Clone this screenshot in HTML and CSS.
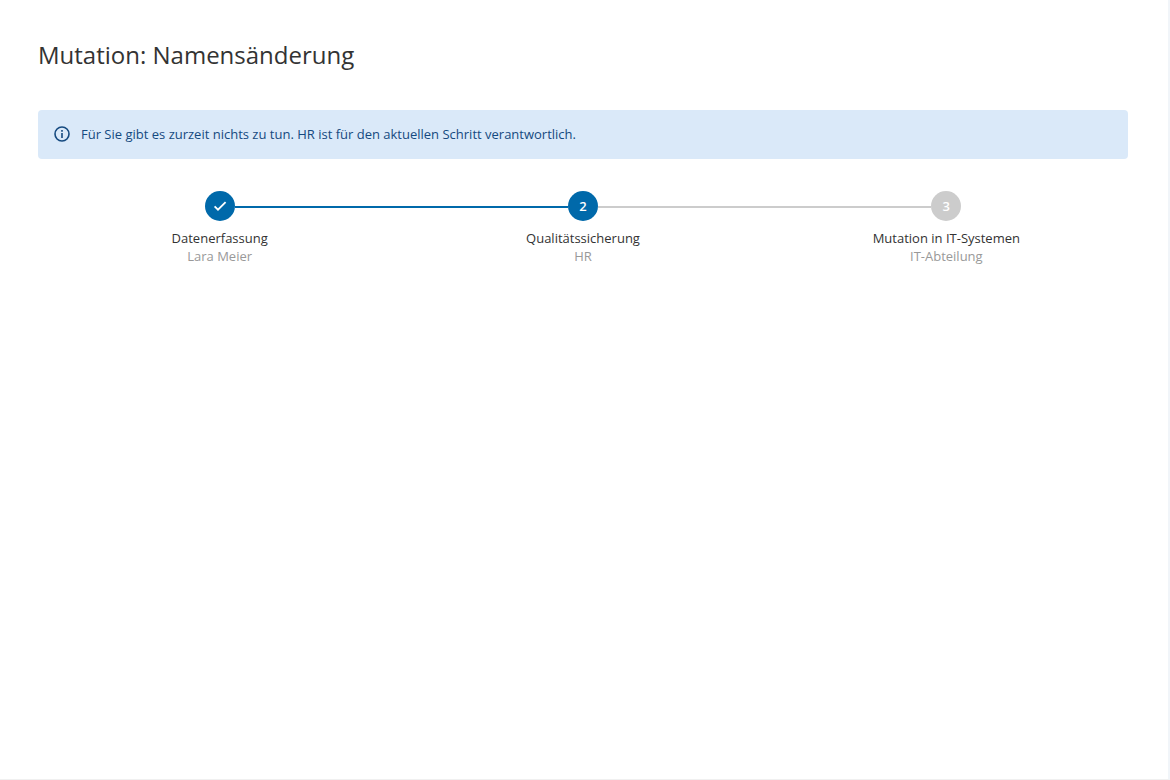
FILE: index.html
```html
<!DOCTYPE html>
<html lang="de">
<head>
<meta charset="utf-8">
<meta name="viewport" content="width=device-width, initial-scale=1">
<title>Mutation: Namensänderung</title>
<link rel="stylesheet" href="styles.css">
</head>
<body>
<main class="page">
  <h1 class="title">Mutation: Namensänderung</h1>
  <div class="notice" role="status">
    <svg class="notice-icon" viewBox="0 0 16 16" aria-hidden="true">
      <circle cx="8" cy="8" r="7" fill="none" stroke="currentColor" stroke-width="1.6"/>
      <path d="M7.2 4.1h1.6v1.6H7.2zM7.2 7h1.6v5H7.2z" fill="currentColor"/>
    </svg>
    <p class="notice-text">Für Sie gibt es zurzeit nichts zu tun. HR ist für den aktuellen Schritt verantwortlich.</p>
  </div>
  <ol class="steps">
    <li class="step step-done">
      <div class="track">
        <span class="marker">
          <svg class="check" viewBox="0 0 14 14" role="img" aria-label="Erledigt">
            <path d="M1.6 7.3L5 10.7L12.6 3.1" fill="none" stroke="currentColor" stroke-width="1.8"/>
          </svg>
        </span>
      </div>
      <span class="step-name">Datenerfassung</span>
      <span class="step-owner">Lara Meier</span>
    </li>
    <li class="step step-current" aria-current="step">
      <div class="track"><span class="marker">2</span></div>
      <span class="step-name">Qualitätssicherung</span>
      <span class="step-owner">HR</span>
    </li>
    <li class="step step-open">
      <div class="track"><span class="marker">3</span></div>
      <span class="step-name">Mutation in IT-Systemen</span>
      <span class="step-owner">IT-Abteilung</span>
    </li>
  </ol>
</main>
</body>
</html>
```
FILE: styles.css
```css
* {
  box-sizing: border-box;
}

body {
  margin: 0;
  background: #fff;
  color: #333;
  font-family: "Open Sans", "Noto Sans", sans-serif;
  font-size: 13px;
  line-height: 18px;
}

.page {
  min-height: 100vh;
  padding: 38px 40px 38px 38px;
  border-right: 2px solid #f1f5f9;
  border-bottom: 1px solid #f0f0f0;
}

.title {
  margin: 0 0 38px;
  font-size: 24px;
  font-weight: 400;
  line-height: 34px;
}

.notice {
  display: flex;
  align-items: center;
  gap: 11px;
  padding: 15px 16px 16px;
  border-radius: 4px;
  background: #dae9f9;
  color: #154a80;
}

.notice-icon {
  flex: none;
  width: 16px;
  height: 16px;
}

.notice-text {
  margin: 0;
}

.steps {
  display: grid;
  grid-template-columns: repeat(3, 1fr);
  margin: 32px 0 0;
  padding: 0;
  list-style: none;
}

.step {
  display: flex;
  flex-direction: column;
  align-items: center;
  text-align: center;
}

.track {
  display: flex;
  align-items: flex-start;
  align-self: stretch;
  margin-bottom: 8px;
}

.track::before,
.track::after {
  content: "";
  flex: 1;
  height: 2px;
  margin-top: 15px;
  background: #ccc;
}

.step-done .track::after,
.step-current .track::before {
  background: #0069aa;
}

.step:first-child .track::before,
.step:last-child .track::after {
  background: transparent;
}

.marker {
  display: flex;
  align-items: center;
  justify-content: center;
  width: 30px;
  height: 30px;
  border-radius: 50%;
  background: #0069aa;
  color: #fff;
  font-weight: 600;
}

.step-open .marker {
  background: #ccc;
}

.check {
  width: 14px;
  height: 14px;
}

.step-owner {
  color: #999;
}
```
